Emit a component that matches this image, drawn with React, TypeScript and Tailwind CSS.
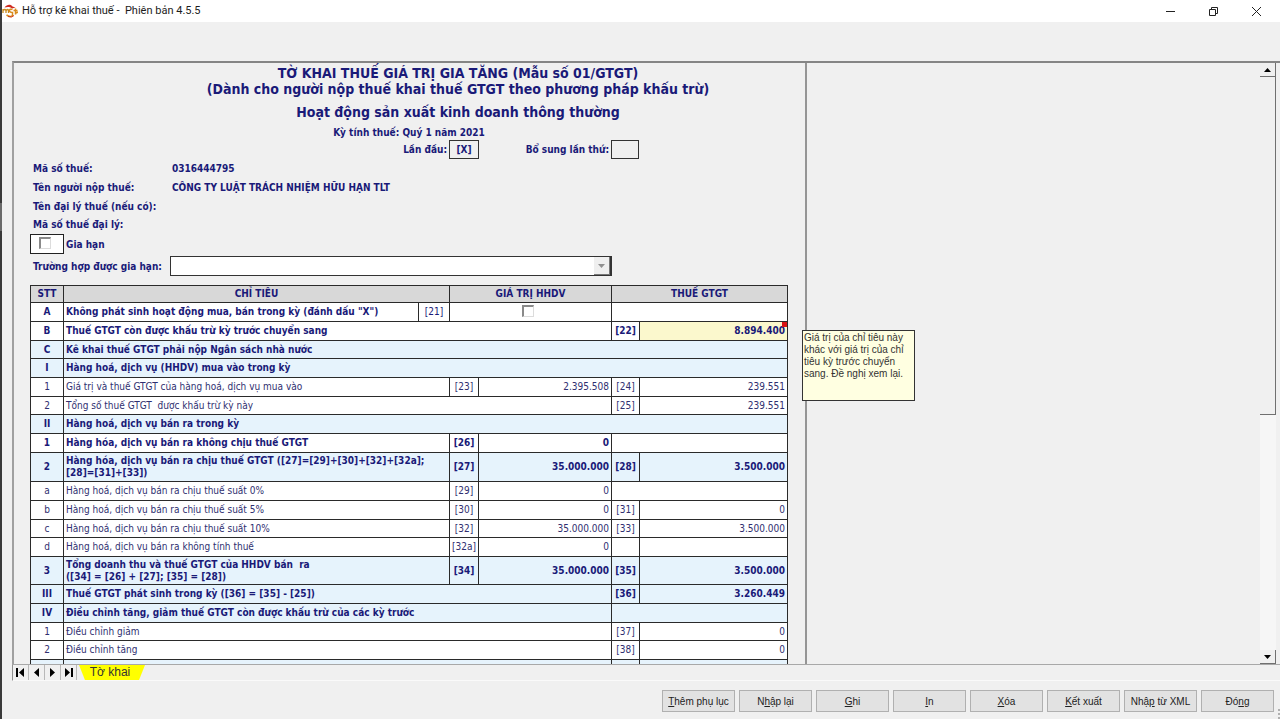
import type { ReactNode } from "react";
import clsx from "clsx";

type Row = {
  no: string;
  label: ReactNode;
  bold?: boolean;
  blue?: boolean;
  height: string;
  // codes and values of the two money columns
  code1?: string;
  value1?: string;
  code2?: string;
  value2?: string;
  layout: "full" | "split" | "left" | "right" | "noCode" | "check";
  flagged?: boolean;
};

const ROWS: Row[] = [
  { no: "A", label: 'Không phát sinh hoạt động mua, bán trong kỳ (đánh dấu "X")', bold: true, height: "h-[19px]", layout: "check", code1: "[21]" },
  { no: "B", label: "Thuế GTGT còn được khấu trừ kỳ trước chuyển sang", bold: true, height: "h-[19px]", layout: "right", code2: "[22]", value2: "8.894.400", flagged: true },
  { no: "C", label: "Kê khai thuế GTGT phải nộp Ngân sách nhà nước", bold: true, blue: true, height: "h-[18px]", layout: "full" },
  { no: "I", label: "Hàng hoá, dịch vụ (HHDV) mua vào trong kỳ", bold: true, blue: true, height: "h-[19px]", layout: "full" },
  { no: "1", label: "Giá trị và thuế GTGT của hàng hoá, dịch vụ mua vào", height: "h-[19px]", layout: "split", code1: "[23]", value1: "2.395.508", code2: "[24]", value2: "239.551" },
  { no: "2", label: "Tổng số thuế GTGT  được khấu trừ kỳ này", height: "h-[18px]", layout: "right", code2: "[25]", value2: "239.551" },
  { no: "II", label: "Hàng hoá, dịch vụ bán ra trong kỳ", bold: true, blue: true, height: "h-[19px]", layout: "full" },
  { no: "1", label: "Hàng hóa, dịch vụ bán ra không chịu thuế GTGT", bold: true, height: "h-[19px]", layout: "left", code1: "[26]", value1: "0" },
  {
    no: "2",
    label: (
      <>
        Hàng hóa, dịch vụ bán ra chịu thuế GTGT ([27]=[29]+[30]+[32]+[32a];
        <br />
        [28]=[31]+[33])
      </>
    ),
    bold: true, blue: true, height: "h-[29px]", layout: "split", code1: "[27]", value1: "35.000.000", code2: "[28]", value2: "3.500.000",
  },
  { no: "a", label: "Hàng hoá, dịch vụ bán ra chịu thuế suất 0%", height: "h-[19px]", layout: "left", code1: "[29]", value1: "0" },
  { no: "b", label: "Hàng hoá, dịch vụ bán ra chịu thuế suất 5%", height: "h-[19px]", layout: "split", code1: "[30]", value1: "0", code2: "[31]", value2: "0" },
  { no: "c", label: "Hàng hoá, dịch vụ bán ra chịu thuế suất 10%", height: "h-[18px]", layout: "split", code1: "[32]", value1: "35.000.000", code2: "[33]", value2: "3.500.000" },
  { no: "d", label: "Hàng hoá, dịch vụ bán ra không tính thuế", height: "h-[19px]", layout: "split", code1: "[32a]", value1: "0" },
  {
    no: "3",
    label: (
      <>
        Tổng doanh thu và thuế GTGT của HHDV bán  ra
        <br />
        ([34] = [26] + [27]; [35] = [28])
      </>
    ),
    bold: true, blue: true, height: "h-[28px]", layout: "split", code1: "[34]", value1: "35.000.000", code2: "[35]", value2: "3.500.000",
  },
  { no: "III", label: "Thuế GTGT phát sinh trong kỳ ([36] = [35] - [25])", bold: true, blue: true, height: "h-[19px]", layout: "right", code2: "[36]", value2: "3.260.449" },
  { no: "IV", label: "Điều chỉnh tăng, giảm thuế GTGT còn được khấu trừ của các kỳ trước", bold: true, blue: true, height: "h-[19px]", layout: "noCode" },
  { no: "1", label: "Điều chỉnh giảm", height: "h-[18px]", layout: "right", code2: "[37]", value2: "0" },
  { no: "2", label: "Điều chỉnh tăng", height: "h-[19px]", layout: "right", code2: "[38]", value2: "0" },
  { no: "", label: "", bold: true, blue: true, height: "h-[19px]", layout: "right" },
];

const BUTTONS: [string, string, string][] = [
  ["", "T", "hêm phụ lục"],
  ["N", "h", "ập lại"],
  ["", "G", "hi"],
  ["", "I", "n"],
  ["", "X", "óa"],
  ["", "K", "ết xuất"],
  ["Nhậ", "p", " từ XML"],
  ["Đó", "n", "g"],
];

const NAV = [
  { name: "Trang đầu", d: "M1 1h2v9h-2z M9 1v9l-5 -4.5z" },
  { name: "Trang trước", d: "M8 1v9l-5 -4.5z" },
  { name: "Trang sau", d: "M3 1v9l5 -4.5z" },
  { name: "Trang cuối", d: "M2 1v9l5 -4.5z M8 1h2v9h-2z" },
];

const checkbox =
  "block size-3 appearance-none border-t-2 border-l-2 border-r border-b border-t-[#8a8a8a] border-l-[#8a8a8a] border-r-[#dcdcdc] border-b-[#dcdcdc] bg-white";

const cell = "border-r border-b border-[#2a2a2a] p-0 align-middle whitespace-nowrap overflow-hidden";

const TitleBar = () => (
  <header className="flex h-[22px] shrink-0 items-center bg-white pr-0.5 font-['Roboto','Liberation_Sans',sans-serif] text-[11px] text-[#1c1c1c]">
    <svg className="h-4 w-4 shrink-0" viewBox="0 0 16 16">
      <path d="M2.5 4.5C5 .8 9 1 10.500 3.500L13.500 4.500L10 5.500C7.500 3.500 5 4 2.500 4.500Z" fill="#cf2a1f" />
      <path d="M1 6v4M1 7.500q2-2 3 0v2.500M4 7.500q2-2 2.500 0V10" stroke="#c98a1c" strokeWidth="1.300" fill="none" />
      <path d="M10.500 6.500q-3-1-3 1t3 2v3q-2 2-6-.5M13.500 5.500v6M11.500 7.500h4M13.500 10q2 0 2-1.500" stroke="#d98b1b" strokeWidth="1.500" fill="none" />
      <path d="M6 13.500q4 1.500 6-1" stroke="#cf3a1f" strokeWidth="1" fill="none" />
    </svg>
    <h1 className="ml-1 whitespace-pre">Hỗ trợ kê khai thuế -  Phiên bản 4.5.5</h1>
    <div className="ml-auto flex">
      <button type="button" aria-label="Thu nhỏ" className="flex h-5 w-[43px] items-center justify-center">
        <svg className="size-[11px]" viewBox="0 0 11 11" fill="none" stroke="#222">
          <path d="M1 5.500h9" />
        </svg>
      </button>
      <button type="button" aria-label="Khôi phục" className="flex h-5 w-[43px] items-center justify-center">
        <svg className="size-[11px]" viewBox="0 0 11 11" fill="none" stroke="#222">
          <path d="M1.500 3.500h6v6h-6zM3.500 3.500v-2h6v6h-2" />
        </svg>
      </button>
      <button type="button" aria-label="Đóng cửa sổ" className="flex h-5 w-[43px] items-center justify-center">
        <svg className="size-[11px]" viewBox="0 0 11 11" fill="none" stroke="#222">
          <path d="M1 1l9 9M10 1l-9 9" />
        </svg>
      </button>
    </div>
  </header>
);

const FormHead = () => (
  <div className="text-[10px] font-bold">
    <div className="pt-0.5 pl-[98px] text-center text-sm leading-4">
      <h2>TỜ KHAI THUẾ GIÁ TRỊ GIA TĂNG (Mẫu số 01/GTGT)</h2>
      <p>(Dành cho người nộp thuế khai thuế GTGT theo phương pháp khấu trừ)</p>
      <p className="mt-[7px]">Hoạt động sản xuất kinh doanh thông thường</p>
    </div>
    <p className="mt-1 h-4 text-center leading-[18px]">Kỳ tính thuế: Quý 1 năm 2021</p>
    <div className="flex h-[19px] items-center">
      <label htmlFor="first" className="w-[419px] pr-0.5 text-right">
        Lần đầu:
      </label>
      <input id="first" readOnly value="[X]" className="h-[19px] w-[30px] border border-[#333] text-center outline-none" />
      <label htmlFor="extra" className="w-[132px] pr-0.5 text-right">
        Bổ sung lần thứ:
      </label>
      <input id="extra" className="h-[19px] w-7 border border-[#333] outline-none" />
    </div>
    <dl className="grid grid-cols-[139px_1fr] pl-[3px] leading-[19px]">
      <dt>Mã số thuế:</dt>
      <dd>0316444795</dd>
      <dt>Tên người nộp thuế:</dt>
      <dd>CÔNG TY LUẬT TRÁCH NHIỆM HỮU HẠN TLT</dd>
      <dt>Tên đại lý thuế (nếu có):</dt>
      <dd />
      <dt className="leading-[18px]">Mã số thuế đại lý:</dt>
      <dd />
    </dl>
    <label className="flex h-5 items-center">
      <span className="mr-0.5 flex h-5 w-[34px] justify-center border border-[#222] bg-white pt-0.5 pr-1">
        <input type="checkbox" className={checkbox} />
      </span>
      Gia hạn
    </label>
    <div className="mt-0.5 flex h-5 items-center pl-[3px]">
      <label htmlFor="reason" className="w-[137px] shrink-0 whitespace-nowrap">
        Trường hợp được gia hạn:
      </label>
      <div className="relative h-5 w-[442px] flex-none">
        <select id="reason" className="block h-5 w-full appearance-none border border-r-2 border-[#333] bg-white outline-none">
          <option />
        </select>
        <span className="pointer-events-none absolute top-px right-0.5 flex h-[18px] w-4 items-center justify-center border-r border-b border-[#777] bg-[#efefef]">
          <svg className="h-1 w-[7px]" viewBox="0 0 7 4">
            <path d="M0 0h7L3.500 4z" fill="#909090" />
          </svg>
        </span>
      </div>
    </div>
  </div>
);

const TableRow = ({ row }: { row: Row }) => {
  const code = clsx(cell, "text-center");
  const value = clsx(cell, "pr-0.5 text-right");
  const labelSpan = { check: 1, split: 2, left: 2, right: 4, noCode: 4, full: 6 }[row.layout];

  return (
    <tr className={clsx(row.height, row.blue ? "bg-[#e6f3fc]" : "bg-white", row.bold ? "font-bold" : "text-[#2f2f70]")}>
      <td className={code}>{row.no}</td>
      <td colSpan={labelSpan} className={clsx(cell, "pl-0.5 whitespace-pre")}>
        {row.label}
      </td>
      {row.layout === "check" && (
        <>
          <td className={clsx(code, "font-normal")}>{row.code1}</td>
          <td colSpan={2} className={clsx(cell, "pr-1.5 pb-0.5")}>
            <input type="checkbox" aria-label="Không phát sinh hoạt động" className={clsx(checkbox, "mx-auto")} />
          </td>
          <td colSpan={2} className={cell} />
        </>
      )}
      {(row.layout === "split" || row.layout === "left") && (
        <>
          <td className={code}>{row.code1}</td>
          <td className={value}>{row.value1}</td>
        </>
      )}
      {(row.layout === "split" || row.layout === "right") && (
        <>
          <td className={code}>{row.code2}</td>
          <td className={clsx(value, row.flagged && "relative bg-[#fbf8cd]")}>
            {row.value2}
            {row.flagged && <span className="absolute top-0 right-0 size-[5px] bg-[#d81414]" />}
          </td>
        </>
      )}
      {(row.layout === "left" || row.layout === "noCode") && <td colSpan={2} className={cell} />}
    </tr>
  );
};

const Declaration = () => (
  <table className="mt-[9px] w-[758px] table-fixed border-separate border-spacing-0 border-t border-l border-[#2a2a2a] text-[10px] leading-3">
    <colgroup>
      <col className="w-[33px]" />
      <col className="w-[355px]" />
      <col className="w-[31px]" />
      <col className="w-[29px]" />
      <col className="w-[133px]" />
      <col className="w-[28px]" />
      <col />
    </colgroup>
    <thead>
      <tr className="h-[17px] bg-[#d8d8d8]">
        <th className={cell}>STT</th>
        <th colSpan={2} className={cell}>CHỈ TIÊU</th>
        <th colSpan={2} className={cell}>GIÁ TRỊ HHDV</th>
        <th colSpan={2} className={cell}>THUẾ GTGT</th>
      </tr>
    </thead>
    <tbody>
      {ROWS.map((row, index) => (
        <TableRow key={index} row={row} />
      ))}
    </tbody>
  </table>
);

const ScrollBar = () => (
  <div className="ml-auto flex w-4 shrink-0 flex-col bg-[#f6f6f6]">
    <button type="button" aria-label="Cuộn lên" className="flex h-[14px] items-center justify-center border-r border-b border-[#707070] bg-[#f0f0f0]">
      <svg className="h-1 w-[7px]" viewBox="0 0 7 4">
        <path d="M0 4h7L3.500 0z" />
      </svg>
    </button>
    <div className="flex-1">
      <div className="h-[59%] border-r border-b border-[#707070] bg-[#f0f0f0]" />
    </div>
    <button type="button" aria-label="Cuộn xuống" className="flex h-[14px] items-center justify-center border-r border-b border-[#707070] bg-[#f0f0f0]">
      <svg className="h-1 w-[7px]" viewBox="0 0 7 4">
        <path d="M0 0h7L3.500 4z" />
      </svg>
    </button>
  </div>
);

const SheetTabs = () => (
  <nav className="flex h-4 shrink-0 border-l border-b border-l-[#909090] border-b-[#fafafa]">
    {NAV.map((item) => (
      <button key={item.name} type="button" aria-label={item.name} className="flex h-[15px] w-4 items-center justify-center border-r border-[#b8b8b8]">
        <svg className="size-[11px]" viewBox="0 0 11 11">
          <path d={item.d} />
        </svg>
      </button>
    ))}
    <button
      type="button"
      className="ml-0.5 h-[15px] w-[66px] bg-[#ffff00] pr-1 font-['Liberation_Sans',sans-serif] text-xs leading-[15px] text-[#333] [clip-path:polygon(0_0,100%_0,91%_100%,9%_100%)]"
    >
      Tờ khai
    </button>
  </nav>
);

const App = () => {
  return (
    <div className="flex h-screen min-w-[960px] overflow-hidden bg-[#f0f0f0] font-['DejaVu_Sans_Condensed','Noto_Sans',sans-serif] text-[#1a1a78]">
      <div className="w-0.5 shrink-0 bg-[#3a3a3a] pt-[203px]">
        <div className="h-7 bg-[#6a6a6a]" />
      </div>
      <div className="flex min-w-0 flex-1 flex-col">
        <TitleBar />
        <main className="mt-[39px] ml-2.5 flex min-h-0 flex-1 flex-col">
          <div className="relative flex min-h-0 flex-1 border-t-2 border-b border-l-2 border-t-[#858585] border-b-[#a8a8a8] border-l-[#a0a0a0] pr-1">
            <div className="w-[793px] shrink-0 overflow-hidden border-r-2 border-[#959595] pl-4">
              <div className="w-[758px]">
                <FormHead />
                <Declaration />
              </div>
            </div>
            <p
              role="tooltip"
              className="absolute top-[267px] left-[788px] h-[71px] w-[113px] border border-[#333] bg-[#ffffe1] pt-px pl-px font-['Liberation_Sans',sans-serif] text-[10px] leading-3 text-[#333]"
            >
              Giá trị của chỉ tiêu này khác với giá trị của chỉ tiêu kỳ trước chuyển sang. Đề nghị xem lại.
            </p>
            <ScrollBar />
          </div>
          <SheetTabs />
        </main>
        <footer className="relative flex h-[38px] shrink-0 items-start justify-end gap-1 pt-[9px] pr-1.5 font-['Liberation_Sans',sans-serif] text-[10px] text-[#222]">
          {BUTTONS.map(([before, key, after]) => (
            <button key={before + key + after} type="button" className="h-[22px] w-[73px] border border-[#b0b0b0] bg-[#e2e2e2] whitespace-pre">
              {before}
              <u>{key}</u>
              {after}
            </button>
          ))}
          {/* Window resize grip */}
          <svg className="absolute right-0 bottom-0 h-[11px] w-1" viewBox="0 0 4 11" fill="#b0b0b0">
            <path d="M2 1h2v2h-2zM2 5h2v2h-2zM2 9h2v2h-2z" />
          </svg>
        </footer>
      </div>
    </div>
  );
};

export default App;
